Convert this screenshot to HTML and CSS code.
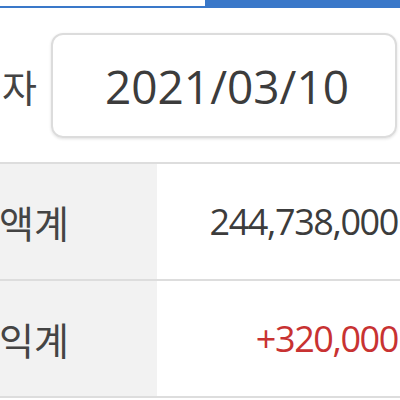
FILE: index.html
```html
<!DOCTYPE html>
<html lang="ko">

<head>
  <meta charset="UTF-8">
  <meta name="viewport" content="width=device-width, initial-scale=1.0">
  <title>잔고 조회</title>
  <link rel="stylesheet" href="styles.css">
</head>

<body>
  <div class="tabs">
    <div class="tab"></div>
    <div class="tab tab-active"></div>
  </div>

  <div class="date-row">
    <div class="date-label"><span>조회일자</span></div>
    <div class="date-box">2021/03/10</div>
  </div>

  <div class="summary">
    <div class="summary-row">
      <div class="summary-label"><span>평가금액계</span></div>
      <div class="summary-value">244,738,000</div>
    </div>
    <div class="summary-row">
      <div class="summary-label"><span>평가손익계</span></div>
      <div class="summary-value plus">+320,000</div>
    </div>
  </div>
</body>

</html>
```

FILE: styles.css
```css
body {
  margin: 0;
  padding: 0;
  background-color: #ffffff;
  color: #444444;
  font-family: "Open Sans", "Noto Sans CJK KR", sans-serif;
  overflow: hidden;
}

.tabs {
  display: flex;
  height: 8px;
}

.tab {
  width: 205px;
  box-sizing: border-box;
  border-bottom: 2px solid #3a78c9;
}

.tab-active {
  flex: 1;
  background-color: #3a78c9;
}

.date-row {
  display: flex;
  align-items: center;
  margin-top: 25px;
  height: 105px;
}

.date-label {
  width: 37px;
  margin-right: 14px;
  display: flex;
  justify-content: flex-end;
  white-space: nowrap;
  font-family: "Noto Sans CJK KR", sans-serif;
  font-size: 38px;
}

.date-box {
  flex: 1;
  height: 105px;
  margin-right: 3px;
  box-sizing: border-box;
  border: 2px solid #dcdcdc;
  border-radius: 12px;
  box-shadow: 0 1px 3px rgba(0, 0, 0, 0.12);
  display: flex;
  align-items: center;
  justify-content: center;
  font-size: 46px;
  color: #3c3c3c;
  padding-left: 6px;
}

.summary {
  margin-top: 24px;
  border-top: 2px solid #dddddd;
}

.summary-row {
  display: flex;
  height: 115px;
  border-bottom: 2px solid #dddddd;
}

.summary-label {
  width: 157px;
  box-sizing: border-box;
  padding-right: 88px;
  background-color: #f2f2f2;
  display: flex;
  align-items: center;
  justify-content: flex-end;
  white-space: nowrap;
  font-family: "Noto Sans CJK KR", sans-serif;
  font-size: 38px;
}

.summary-value {
  flex: 1;
  display: flex;
  align-items: center;
  justify-content: flex-end;
  padding-right: 2px;
  font-size: 36px;
  letter-spacing: -1.4px;
  color: #3c3c3c;
}

.plus {
  color: #c83232;
}
```
